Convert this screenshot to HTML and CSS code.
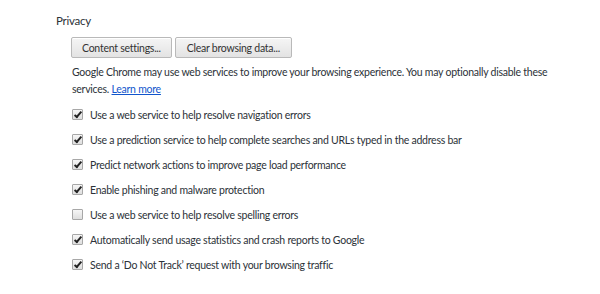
FILE: index.html
```html
<!DOCTYPE html>
<html lang="en">

<head>
    <meta charset="UTF-8">
    <title>Privacy</title>
    <link rel="stylesheet" href="styles.css">
</head>

<body>
    <section class="privacy">
        <h3>Privacy</h3>

        <div class="section-body">
            <div class="buttons">
                <button class="btn">Content settings...</button>
                <button class="btn">Clear browsing data...</button>
            </div>

            <p class="desc">
                Google Chrome may use web services to improve your browsing experience. You may optionally disable these
                services. <a href="#">Learn more</a>
            </p>

            <label class="option"><span class="box checked"></span>Use a web service to help resolve navigation errors</label>
            <label class="option"><span class="box checked"></span>Use a prediction service to help complete searches and URLs typed in the address bar</label>
            <label class="option"><span class="box checked"></span>Predict network actions to improve page load performance</label>
            <label class="option"><span class="box checked"></span>Enable phishing and malware protection</label>
            <label class="option"><span class="box"></span>Use a web service to help resolve spelling errors</label>
            <label class="option"><span class="box checked"></span>Automatically send usage statistics and crash reports to Google</label>
            <label class="option"><span class="box checked"></span>Send a ‘Do Not Track’ request with your browsing traffic</label>
        </div>
    </section>
</body>

</html>
```

FILE: styles.css
```css
body {
    font-family: Lato, 'Open Sans', sans-serif;
    font-size: 10.5px;
    letter-spacing: -0.25px;
    margin: 0;
    padding: 0;
    background-color: #fff;
    color: #2c3238;
}

.privacy {
    padding: 12px 0 0 56px;
}

h3 {
    font-size: 11.5px;
    font-weight: normal;
    margin: 0 0 7px 0;
    line-height: 18px;
}

.section-body {
    padding-left: 15px;
}

.buttons {
    display: flex;
    gap: 3px;
}

.btn {
    font-family: inherit;
    font-size: 10.5px;
    letter-spacing: -0.25px;
    color: #333;
    height: 21px;
    padding: 0 10px;
    border: 1px solid #b9b9b9;
    border-radius: 2px;
    background: linear-gradient(#f5f5f5, #e3e3e3);
    box-shadow: inset 0 1px 0 #fff;
}

.btn + .btn {
    padding: 0 11px;
}

.desc {
    margin: 6px 0 0 1px;
    line-height: 17px;
    max-width: 490px;
}

.desc a {
    color: #15c;
}

.option {
    display: flex;
    align-items: center;
    height: 25px;
    margin-left: 1px;
}

.option:first-of-type {
    margin-top: 4px;
}

.box {
    width: 9px;
    height: 9px;
    border: 1px solid #a7a7a7;
    border-radius: 1px;
    background: linear-gradient(#f6f6f6, #dedede);
    margin-right: 7px;
    position: relative;
    flex: none;
}

.box.checked::after {
    content: '';
    position: absolute;
    left: 3px;
    top: 0;
    width: 2px;
    height: 6px;
    border: solid #222;
    border-width: 0 2px 2px 0;
    transform: rotate(40deg);
}
```
